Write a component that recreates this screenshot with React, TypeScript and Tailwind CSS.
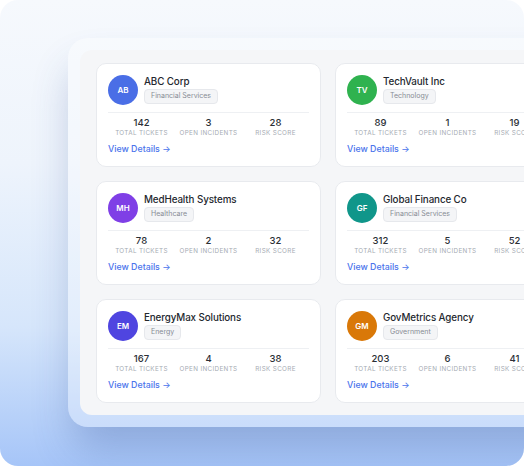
import React from "react";

type Client = {
  initials: string;
  name: string;
  sector: string;
  color: string;
  tickets: number;
  incidents: number;
  risk: number;
};

const clients: Client[] = [
  { initials: "AB", name: "ABC Corp", sector: "Financial Services", color: "bg-[#4a6ee6]", tickets: 142, incidents: 3, risk: 28 },
  { initials: "TV", name: "TechVault Inc", sector: "Technology", color: "bg-[#2fb24f]", tickets: 89, incidents: 1, risk: 19 },
  { initials: "MH", name: "MedHealth Systems", sector: "Healthcare", color: "bg-[#7f3fe6]", tickets: 78, incidents: 2, risk: 32 },
  { initials: "GF", name: "Global Finance Co", sector: "Financial Services", color: "bg-[#10968a]", tickets: 312, incidents: 5, risk: 52 },
  { initials: "EM", name: "EnergyMax Solutions", sector: "Energy", color: "bg-[#4f45e0]", tickets: 167, incidents: 4, risk: 38 },
  { initials: "GM", name: "GovMetrics Agency", sector: "Government", color: "bg-[#d97808]", tickets: 203, incidents: 6, risk: 41 },
];

function Stat({ value, label }: { value: number; label: string }) {
  return (
    <div className="flex flex-col items-center">
      <span className="text-[9.5px] leading-[12px] font-medium text-[#2b2f36]">{value}</span>
      <span className="text-[6.3px] leading-[9px] uppercase tracking-[0.35px] text-[#a6abb3] whitespace-nowrap">
        {label}
      </span>
    </div>
  );
}

function ClientCard({ c }: { c: Client }) {
  return (
    <div className="w-[225px] shrink-0 rounded-[10px] border border-[#e8eaee] bg-white p-[11px]">
      <div className="flex items-center gap-[6px]">
        <div
          className={`${c.color} flex h-[30px] w-[30px] shrink-0 items-center justify-center rounded-full text-[8px] font-semibold text-white`}
        >
          {c.initials}
        </div>
        <div className="flex flex-col items-start">
          <span className="text-[9.8px] leading-[12px] font-medium tracking-[-0.1px] text-[#23272e] whitespace-nowrap">
            {c.name}
          </span>
          <span className="mt-[1px] flex h-[15px] items-center rounded-[4px] border border-[#e6e8ec] bg-[#f4f5f7] px-[6px] text-[7px] text-[#878c95] whitespace-nowrap">
            {c.sector}
          </span>
        </div>
      </div>
      <div className="mt-[7px] border-t border-[#eef0f3] pt-[4px]">
        <div className="grid grid-cols-3">
          <Stat value={c.tickets} label="Total Tickets" />
          <Stat value={c.incidents} label="Open Incidents" />
          <Stat value={c.risk} label="Risk Score" />
        </div>
      </div>
      <div className="mt-[5px] text-[8.8px] leading-[12px] font-medium text-[#4a74ec]">View Details →</div>
    </div>
  );
}

export default function App() {
  const rows = [clients.slice(0, 2), clients.slice(2, 4), clients.slice(4, 6)];
  return (
    <div className="h-[466px] w-[524px] bg-white font-['Inter',sans-serif]">
      <div className="h-full w-full overflow-hidden rounded-[18px] bg-[linear-gradient(180deg,#f6f9fd_0%,#eef4fc_35%,#d6e6fb_70%,#a6c5f8_100%)] pl-[68px] pt-[38px]">
        <div className="w-[520px] rounded-[20px] bg-white/30 p-3 shadow-[0_26px_40px_-6px_rgba(50,80,150,0.3)]">
          <div className="flex flex-col gap-[14px] rounded-[12px] bg-[#f5f6f8] px-4 pb-3 pt-[13px]">
            {rows.map((r, i) => (
              <div key={i} className="flex gap-[14px]">
                {r.map((c) => (
                  <ClientCard key={c.initials} c={c} />
                ))}
              </div>
            ))}
          </div>
        </div>
      </div>
    </div>
  );
}
